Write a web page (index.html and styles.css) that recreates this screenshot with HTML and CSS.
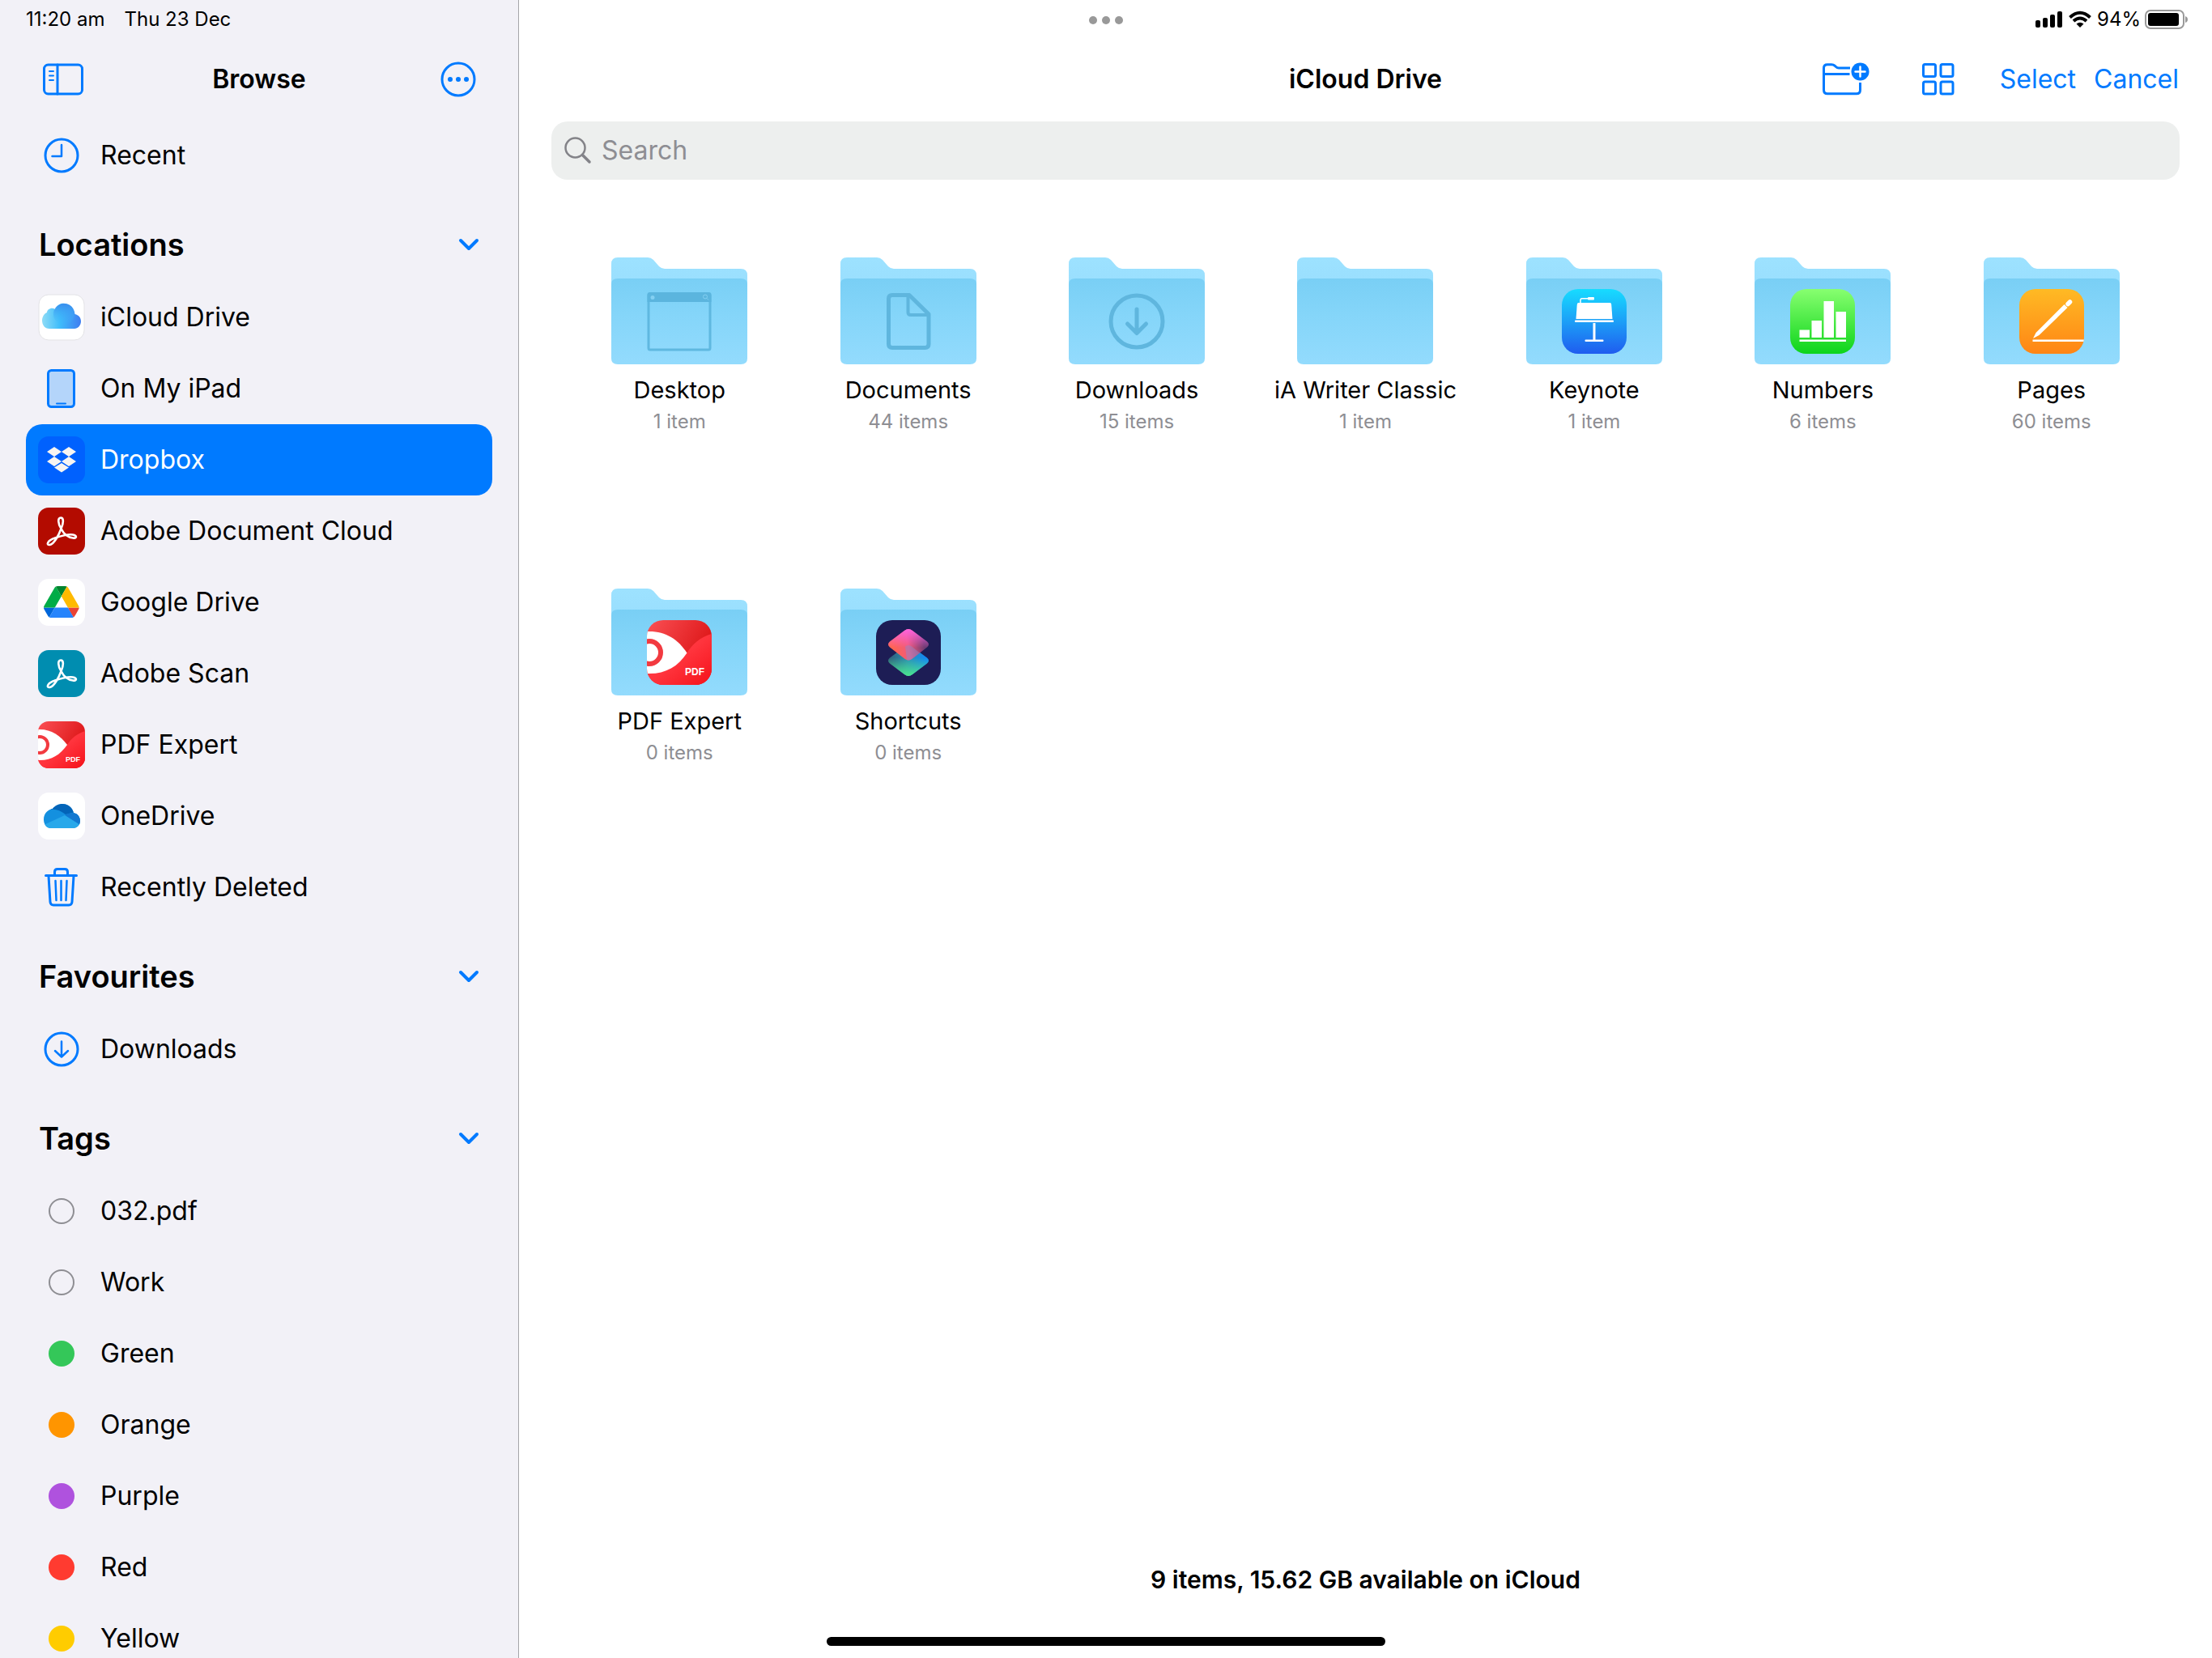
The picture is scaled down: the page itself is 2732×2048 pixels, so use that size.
FILE: index.html
```html
<!DOCTYPE html>
<html lang="en">
<head>
    <meta charset="UTF-8">
    <meta name="viewport" content="width=device-width, initial-scale=1.0">
    <title>iCloud Drive</title>
    <link rel="stylesheet" href="styles.css">
</head>
<body>

    <!-- Shared shapes -->
    <svg class="defs" width="0" height="0" aria-hidden="true">
        <defs>
            <linearGradient id="folderBack" x1="0" y1="0" x2="0" y2="1">
                <stop offset="0" stop-color="#9de2ff"/>
                <stop offset="1" stop-color="#97dcfd"/>
            </linearGradient>
            <linearGradient id="folderFront" x1="0" y1="0" x2="0" y2="1">
                <stop offset="0" stop-color="#79cff5"/>
                <stop offset="0.4" stop-color="#84d5f9"/>
                <stop offset="1" stop-color="#93dbfd"/>
            </linearGradient>
            <linearGradient id="pdfDark" x1="0" y1="0" x2="1" y2="0.6">
                <stop offset="0" stop-color="#fb5055"/>
                <stop offset="1" stop-color="#d90f10"/>
            </linearGradient>
            <linearGradient id="pdfLight" x1="0" y1="0" x2="1" y2="1">
                <stop offset="0" stop-color="#ff4450"/>
                <stop offset="0.5" stop-color="#ff343d"/>
                <stop offset="1" stop-color="#f5121a"/>
            </linearGradient>
            <linearGradient id="keynoteBg" x1="0" y1="0" x2="0" y2="1">
                <stop offset="0" stop-color="#17dcff"/>
                <stop offset="0.5" stop-color="#1c9ff7"/>
                <stop offset="1" stop-color="#1f5cef"/>
            </linearGradient>
            <linearGradient id="numbersBg" x1="0" y1="0" x2="0" y2="1">
                <stop offset="0" stop-color="#88ff70"/>
                <stop offset="1" stop-color="#0dd41b"/>
            </linearGradient>
            <linearGradient id="pagesBg" x1="0" y1="0" x2="0" y2="1">
                <stop offset="0" stop-color="#ffba24"/>
                <stop offset="1" stop-color="#ff8515"/>
            </linearGradient>
            <linearGradient id="pink" x1="0.1" y1="0.6" x2="0.9" y2="0.5">
                <stop offset="0" stop-color="#ff6550"/>
                <stop offset="0.5" stop-color="#ef5a7c"/>
                <stop offset="1" stop-color="#6b3a72"/>
            </linearGradient>
            <linearGradient id="pinkTop" x1="0" y1="0" x2="0" y2="1">
                <stop offset="0" stop-color="#ff63e0"/>
                <stop offset="0.6" stop-color="#ff63e0" stop-opacity="0"/>
            </linearGradient>
            <linearGradient id="blue" x1="0" y1="0.4" x2="1" y2="0.5">
                <stop offset="0" stop-color="#2f5d77"/>
                <stop offset="0.5" stop-color="#2b91b5"/>
                <stop offset="1" stop-color="#0e86ff"/>
            </linearGradient>
            <linearGradient id="greenBottom" x1="0" y1="0" x2="0" y2="1">
                <stop offset="0.4" stop-color="#4be58c" stop-opacity="0"/>
                <stop offset="1" stop-color="#4be58c"/>
            </linearGradient>
            <linearGradient id="cloudBg" x1="0" y1="0" x2="1" y2="0">
                <stop offset="0" stop-color="#8fdcf6"/>
                <stop offset="0.45" stop-color="#3fbdfb"/>
                <stop offset="1" stop-color="#3f7df0"/>
            </linearGradient>
            <linearGradient id="cloudTop" x1="0" y1="0" x2="0" y2="1">
                <stop offset="0" stop-color="#3a8eee"/>
                <stop offset="1" stop-color="#3fbdfb" stop-opacity="0"/>
            </linearGradient>
            <clipPath id="tile58"><rect width="58" height="58" rx="13"/></clipPath>
            <clipPath id="tile80"><rect width="80" height="80" rx="20"/></clipPath>
            <clipPath id="oneCloud"><path d="M16 44 C11 44 7 40 7 33 C7 26 12 21 18 20 C21 16 26 14 30 14 C37 14 42 18 44 25 C49 26 52 30 52 35 C52 40 48 44 43 44 Z"/></clipPath>

            <symbol id="folder" viewBox="0 0 168 132">
                <path fill="url(#folderBack)" d="M0 8 Q0 0 8 0 H45 Q49 0 52 3 L59 11 Q62 14 66 14 H160 Q168 14 168 22 V60 H0 Z"/>
                <path fill="url(#folderFront)" d="M0 33 Q0 26 8 26 H160 Q168 26 168 33 V125 Q168 132 160 132 H8 Q0 132 0 125 Z"/>
            </symbol>
            <symbol id="acrobat" viewBox="0 0 58 58">
                <path fill="none" stroke="#fff" stroke-width="2.6" stroke-linejoin="round" d="M28.5 26 C24.5 20 24 12.5 28 12.5 C32 12.5 31.5 19 28.5 26 C26 33 20 45 14.5 46 C9.5 46.5 11.5 40.5 21 37.5 C30 34.5 37 32.5 43 33.5 C49 34.5 47.5 38.5 43 37.5 C37 37 32 33 28.5 26 Z"/>
            </symbol>
            <symbol id="chevron" viewBox="0 0 28 18">
                <path fill="none" stroke="#007aff" stroke-width="4" stroke-linecap="round" stroke-linejoin="round" d="M4 4 L14 14 L24 4"/>
            </symbol>
        </defs>
    </svg>

    <!-- Sidebar -->
    <aside class="sidebar">
        <div class="status">
            <span>11:20 am</span>
            <span>Thu 23 Dec</span>
        </div>

        <div class="sidebar-head">
            <button class="icon-btn" aria-label="Hide sidebar">
                <svg width="52" height="42" viewBox="0 0 52 42" fill="none" stroke="#007aff" stroke-width="3" stroke-linecap="round">
                    <rect x="2.5" y="3" width="47" height="36" rx="5"/>
                    <path d="M19 3 V39"/>
                    <path stroke-width="2" d="M9 11 H14 M9 16.5 H14 M9 22 H14"/>
                </svg>
            </button>
            <h1>Browse</h1>
            <button class="icon-btn icon-right" aria-label="More">
                <svg width="44" height="44" viewBox="0 0 44 44">
                    <circle cx="22" cy="22" r="20" fill="none" stroke="#007aff" stroke-width="3"/>
                    <g fill="#007aff"><circle cx="12" cy="22" r="3"/><circle cx="22" cy="22" r="3"/><circle cx="32" cy="22" r="3"/></g>
                </svg>
            </button>
        </div>

        <nav>
            <a class="row" href="#">
                <svg class="tile" viewBox="0 0 58 58" fill="none" stroke="#007aff" stroke-width="3" stroke-linecap="round" stroke-linejoin="round">
                    <circle cx="29" cy="29" r="20"/>
                    <path stroke-width="2.5" d="M29 16 V30 H17.5"/>
                </svg>
                Recent
            </a>

            <div class="section">
                <h2>Locations</h2>
                <button class="icon-btn" aria-label="Collapse Locations"><svg width="28" height="18"><use href="#chevron"/></svg></button>
            </div>

            <a class="row" href="#">
                <svg class="tile" viewBox="0 0 58 58">
                    <rect x="1" y="1" width="56" height="56" rx="12" fill="#fff" stroke="#e3e3e6"/>
                    <path fill="url(#cloudBg)" d="M14 43 C8 43 5 38 5 33 C5 28 8 24 11 23 C11 19 17 16 21 19 C25 11 32 11 36 12.5 C42 14 45 20 45.5 25 C50 26 53 29 53 34 C53 39 49 43 45 43 Z"/>
                    <circle cx="32" cy="25" r="13" fill="url(#cloudTop)"/>
                </svg>
                iCloud Drive
            </a>
            <a class="row" href="#">
                <svg class="tile" viewBox="0 0 58 58" stroke="#007aff" stroke-linecap="round">
                    <rect x="12.5" y="6.5" width="32" height="45" rx="4" fill="#b4d5fa" stroke-width="3"/>
                    <path stroke-width="2" d="M23 47.5 H34"/>
                </svg>
                On My iPad
            </a>
            <a class="row selected" href="#" aria-current="page">
                <svg class="tile" viewBox="0 0 58 58">
                    <rect width="58" height="58" rx="13" fill="#0061fe"/>
                    <path fill="#f7f5f2" d="M20 13 L29 19 L20 25 L11 19 Z M38 13 L47 19 L38 25 L29 19 Z M20 25 L29 31 L20 37 L11 31 Z M38 25 L47 31 L38 37 L29 31 Z M29 33 L38 38.5 L29 44.5 L20 38.5 Z"/>
                </svg>
                Dropbox
            </a>
            <a class="row" href="#">
                <svg class="tile" viewBox="0 0 58 58">
                    <rect width="58" height="58" rx="13" fill="#b30b00"/>
                    <use href="#acrobat"/>
                </svg>
                Adobe Document Cloud
            </a>
            <a class="row" href="#">
                <svg class="tile" viewBox="0 0 58 58">
                    <rect width="58" height="58" rx="13" fill="#fff"/>
                    <g transform="translate(7 9) scale(0.5)">
                        <path fill="#0066da" d="m6.6 66.85 3.85 6.65c.8 1.4 1.95 2.5 3.3 3.3l13.75-23.8h-27.5c0 1.55.4 3.1 1.2 4.5z"/>
                        <path fill="#00ac47" d="m43.65 25-13.75-23.8c-1.35.8-2.5 1.9-3.3 3.3l-25.4 44a9.06 9.06 0 0 0-1.2 4.5h27.5z"/>
                        <path fill="#ea4335" d="m73.55 76.8c1.35-.8 2.5-1.9 3.3-3.3l1.6-2.75 7.65-13.25c.8-1.4 1.2-2.95 1.2-4.5h-27.5l5.85 11.5z"/>
                        <path fill="#00832d" d="m43.65 25 13.75-23.8c-1.35-.8-2.9-1.2-4.5-1.2h-18.5c-1.6 0-3.15.45-4.5 1.2z"/>
                        <path fill="#2684fc" d="m59.8 53h-32.3l-13.75 23.8c1.35.8 2.9 1.2 4.5 1.2h50.8c1.6 0 3.15-.45 4.5-1.2z"/>
                        <path fill="#ffba00" d="m73.4 26.5-12.7-22c-.8-1.4-1.95-2.5-3.3-3.3l-13.75 23.8 16.15 28h27.45c0-1.55-.4-3.1-1.2-4.5z"/>
                    </g>
                </svg>
                Google Drive
            </a>
            <a class="row" href="#">
                <svg class="tile" viewBox="0 0 58 58">
                    <rect width="58" height="58" rx="13" fill="#008db0"/>
                    <use href="#acrobat"/>
                </svg>
                Adobe Scan
            </a>
            <a class="row" href="#">
                <svg class="tile" viewBox="0 0 58 58">
                    <g clip-path="url(#tile58)">
                        <rect width="58" height="58" fill="url(#pdfDark)"/>
                        <path fill="url(#pdfLight)" d="M58 12 C47 16 41 21 36 29 L0 44 V58 H58 Z"/>
                        <path fill="#fff" d="M0 10 C15 9 27 17 36 29 C27 42 15 49 0 48 Z"/>
                        <circle cx="2" cy="29" r="10" fill="none" stroke="#f23a40" stroke-width="4"/>
                    </g>
                    <text class="pdf-small" x="34" y="50">PDF</text>
                </svg>
                PDF Expert
            </a>
            <a class="row" href="#">
                <svg class="tile" viewBox="0 0 58 58">
                    <rect width="58" height="58" rx="13" fill="#fff"/>
                    <g clip-path="url(#oneCloud)">
                        <rect width="58" height="58" fill="#1490df"/>
                        <path fill="#0364b8" d="M16 21 C22 20 27 22 34 27 L46 24 L44 10 H16 Z"/>
                        <path fill="#1278d0" d="M33 28 C38 25 42 24 52 27 V40 Z"/>
                        <path fill="#28a8ea" d="M7 40 L33 28 L52 40 V46 H7 Z"/>
                    </g>
                </svg>
                OneDrive
            </a>
            <a class="row" href="#">
                <svg class="tile" viewBox="0 0 58 58" fill="none" stroke="#007aff" stroke-width="3" stroke-linecap="round" stroke-linejoin="round">
                    <path d="M9.5 14.5 H47.5 M13 15 L15 47 Q15.3 51 19 51 H38 Q41.7 51 42 47 L44 15 M20.5 14 V10 Q20.5 6.5 24 6.5 H33 Q36.5 6.5 36.5 10 V14"/>
                    <path stroke-width="2.5" d="M21.5 21 L22.5 45 M28.5 21 V45 M35.5 21 L34.5 45"/>
                </svg>
                Recently Deleted
            </a>

            <div class="section">
                <h2>Favourites</h2>
                <button class="icon-btn" aria-label="Collapse Favourites"><svg width="28" height="18"><use href="#chevron"/></svg></button>
            </div>

            <a class="row" href="#">
                <svg class="tile" viewBox="0 0 58 58" fill="none" stroke="#007aff" stroke-width="3" stroke-linecap="round" stroke-linejoin="round">
                    <circle cx="29" cy="29" r="20"/>
                    <path stroke-width="2.5" d="M29 19.5 V38 M21 31 L29 38.5 L37 31"/>
                </svg>
                Downloads
            </a>

            <div class="section">
                <h2>Tags</h2>
                <button class="icon-btn" aria-label="Collapse Tags"><svg width="28" height="18"><use href="#chevron"/></svg></button>
            </div>

            <a class="row" href="#"><span class="tag tag-none"></span>032.pdf</a>
            <a class="row" href="#"><span class="tag tag-none"></span>Work</a>
            <a class="row" href="#"><span class="tag tag-green"></span>Green</a>
            <a class="row" href="#"><span class="tag tag-orange"></span>Orange</a>
            <a class="row" href="#"><span class="tag tag-purple"></span>Purple</a>
            <a class="row" href="#"><span class="tag tag-red"></span>Red</a>
            <a class="row" href="#"><span class="tag tag-yellow"></span>Yellow</a>
        </nav>
    </aside>

    <!-- Files -->
    <main class="main">
        <div class="status status-right">
            <svg width="34" height="22" viewBox="0 0 34 22">
                <rect x="0" y="12" width="6" height="9" rx="2"/><rect x="9" y="9" width="6" height="12" rx="2"/>
                <rect x="18" y="5" width="6" height="16" rx="2"/><rect x="27" y="1" width="6" height="20" rx="2"/>
            </svg>
            <svg width="28" height="22" viewBox="0 0 28 22" fill="none" stroke="#000" stroke-width="4">
                <path d="M1.5 8.5 Q14 -3 26.5 8.5"/>
                <path d="M6 13 Q14 6 22 13"/>
                <path fill="#000" stroke="none" d="M9.5 16.5 Q14 13 18.5 16.5 L14 21 Z"/>
            </svg>
            <span>94%</span>
            <svg class="battery" width="54" height="24" viewBox="0 0 54 24">
                <rect x="1" y="1" width="47" height="22" rx="6" fill="none" stroke="#999" stroke-width="2"/>
                <rect x="4" y="4" width="38" height="16" rx="3"/>
                <path fill="#999" d="M50 8 Q53 9 53 12 Q53 15 50 16 Z"/>
            </svg>
        </div>

        <header class="toolbar">
            <h1>iCloud Drive</h1>
            <div class="actions">
                <button class="icon-btn" aria-label="New folder">
                    <svg width="58" height="42" viewBox="0 0 58 42" fill="none" stroke="#007aff" stroke-width="3">
                        <path d="M34 7 H20 Q18 7 16.5 5.5 L15.5 4.5 Q13.5 2.8 11 2.8 H6 Q1.5 2.8 1.5 7 V34 Q1.5 38.8 6 38.8 H42 Q46.5 38.8 46.5 34 V25"/>
                        <path d="M1.5 14.5 H33.5"/>
                        <circle cx="46.5" cy="11.5" r="11" fill="#007aff" stroke="none"/>
                        <path stroke="#fff" stroke-width="2.5" stroke-linecap="round" d="M40.5 11.5 H52.5 M46.5 5.5 V17.5"/>
                    </svg>
                </button>
                <button class="icon-btn grid-btn" aria-label="View options">
                    <svg width="40" height="40" viewBox="0 0 40 40" fill="none" stroke="#007aff" stroke-width="3">
                        <rect x="1.5" y="1.5" width="15" height="15" rx="2"/><rect x="23" y="1.5" width="15" height="15" rx="2"/>
                        <rect x="1.5" y="23" width="15" height="15" rx="2"/><rect x="23" y="23" width="15" height="15" rx="2"/>
                    </svg>
                </button>
                <button class="text-btn">Select</button>
                <button class="text-btn">Cancel</button>
            </div>
        </header>

        <label class="search">
            <svg width="34" height="34" viewBox="0 0 34 34" fill="none" stroke="#838388" stroke-linecap="round">
                <circle cx="13.5" cy="13.5" r="12" stroke-width="2.5"/>
                <path stroke-width="3.5" d="M23 23 L31 31"/>
            </svg>
            <input type="search" placeholder="Search" aria-label="Search">
        </label>

        <section class="files">
            <a class="file" href="#">
                <svg class="folder" viewBox="0 0 168 132">
                    <use href="#folder"/>
                    <rect x="46" y="45" width="76" height="69" rx="2" fill="none" stroke="#5fb8e0" stroke-width="3"/>
                    <path fill="#5bb5de" d="M44.5 55 V46 Q44.5 43 47.5 43 H120.5 Q123.5 43 123.5 46 V55 Z"/>
                    <circle cx="51" cy="49.5" r="2.5" fill="#84d0f2"/>
                    <g fill="none" stroke="#84d0f2"><circle cx="116" cy="48.5" r="2.5"/><path d="M118 50.5 L120 52.5"/></g>
                </svg>
                <span class="name">Desktop</span>
                <span class="count">1 item</span>
            </a>
            <a class="file" href="#">
                <svg class="folder" viewBox="0 0 168 132">
                    <use href="#folder"/>
                    <path fill="none" stroke="#5fb6de" stroke-width="5" stroke-linejoin="round" d="M64 46.5 H85 L109 70 V107 Q109 111.5 104.5 111.5 H64 Q59.5 111.5 59.5 107 V51 Q59.5 46.5 64 46.5 Z"/>
                    <path fill="none" stroke="#5fb6de" stroke-width="4" d="M83.5 47 V68 Q83.5 71 87 71 H109"/>
                </svg>
                <span class="name">Documents</span>
                <span class="count">44 items</span>
            </a>
            <a class="file" href="#">
                <svg class="folder" viewBox="0 0 168 132">
                    <use href="#folder"/>
                    <g fill="none" stroke="#5fb6de" stroke-width="5" stroke-linecap="round" stroke-linejoin="round">
                        <circle cx="84" cy="79" r="32"/>
                        <path d="M84 64 V93 M72.5 82 L84 93.5 L95.5 82"/>
                    </g>
                </svg>
                <span class="name">Downloads</span>
                <span class="count">15 items</span>
            </a>
            <a class="file" href="#">
                <svg class="folder" viewBox="0 0 168 132"><use href="#folder"/></svg>
                <span class="name">iA Writer Classic</span>
                <span class="count">1 item</span>
            </a>
            <a class="file" href="#">
                <svg class="folder" viewBox="0 0 168 132">
                    <use href="#folder"/>
                    <g transform="translate(44 39)">
                        <rect width="80" height="80" rx="20" fill="url(#keynoteBg)"/>
                        <path fill="#fff" d="M20.5 17 H59.5 Q61 17 61.2 19 L62.5 37 H17.5 L18.8 19 Q19 17 20.5 17 Z"/>
                        <rect x="16" y="38.5" width="48" height="2.5" rx="1" fill="#fff"/>
                        <rect x="38.5" y="42" width="3" height="22" fill="#fff"/>
                        <rect x="28.5" y="62.5" width="23" height="2.5" rx="1" fill="#fff"/>
                        <path fill="none" stroke="#fff" stroke-width="1.5" d="M23 17 V14 Q23 11.8 25 11.8 H33"/>
                        <rect x="32" y="10" width="8" height="3.5" rx="1" fill="#fff"/>
                    </g>
                </svg>
                <span class="name">Keynote</span>
                <span class="count">1 item</span>
            </a>
            <a class="file" href="#">
                <svg class="folder" viewBox="0 0 168 132">
                    <use href="#folder"/>
                    <g transform="translate(44 39)">
                        <rect width="80" height="80" rx="20" fill="url(#numbersBg)"/>
                        <path fill="#fff" d="M11.5 50.5 H24 V60 H11.5 Z M26.5 39 H39 V60 H26.5 Z M41.5 15 H54 V60 H41.5 Z M56.5 28 H69 V60 H56.5 Z M11.5 62.5 H69 V65 H11.5 Z"/>
                    </g>
                </svg>
                <span class="name">Numbers</span>
                <span class="count">6 items</span>
            </a>
            <a class="file" href="#">
                <svg class="folder" viewBox="0 0 168 132">
                    <use href="#folder"/>
                    <g transform="translate(44 39)">
                        <g clip-path="url(#tile80)">
                            <rect width="80" height="80" fill="url(#pagesBg)"/>
                            <path fill="#fff" d="M16.5 62.5 H80 V65 H16.5 Z M17 61 L20.5 54 L55.5 19 L59.5 23 L24.5 57 Z"/>
                            <path stroke="#fff" stroke-width="5.5" stroke-linecap="round" d="M60 18.5 L62.5 16"/>
                        </g>
                    </g>
                </svg>
                <span class="name">Pages</span>
                <span class="count">60 items</span>
            </a>
            <a class="file" href="#">
                <svg class="folder" viewBox="0 0 168 132">
                    <use href="#folder"/>
                    <g transform="translate(44 39)">
                        <g clip-path="url(#tile80)">
                            <rect width="80" height="80" fill="url(#pdfDark)"/>
                            <path fill="url(#pdfLight)" d="M80 17 C65 21 56 30 49 41 L0 60 V80 H80 Z"/>
                            <path fill="#fff" d="M0 14 C22 13 38 23 49.5 40.5 C38 58 22 67 0 66 Z"/>
                            <circle cx="3" cy="40" r="14" fill="none" stroke="#f23a40" stroke-width="6"/>
                        </g>
                        <text class="pdf-big" x="47" y="68">PDF</text>
                    </g>
                </svg>
                <span class="name">PDF Expert</span>
                <span class="count">0 items</span>
            </a>
            <a class="file" href="#">
                <svg class="folder" viewBox="0 0 168 132">
                    <use href="#folder"/>
                    <g transform="translate(44 39)">
                        <rect width="80" height="80" rx="20" fill="#1d1d55"/>
                        <path fill="url(#blue)" d="M36 32.5 Q40 29.5 44 32.5 L63 46.5 Q67 50 63 53.5 L45 67 Q40 71 35 67 L17 53.5 Q13 50 17 46.5 Z"/>
                        <path fill="url(#greenBottom)" d="M36 32.5 Q40 29.5 44 32.5 L63 46.5 Q67 50 63 53.5 L45 67 Q40 71 35 67 L17 53.5 Q13 50 17 46.5 Z"/>
                        <path fill="url(#pink)" d="M35 13 Q40 9 45 13 L63 26.5 Q67 30 63 33.5 L45 47.5 Q40 51.5 35 47.5 L17 33.5 Q13 30 17 26.5 Z"/>
                        <path fill="url(#pinkTop)" d="M35 13 Q40 9 45 13 L63 26.5 Q67 30 63 33.5 L45 47.5 Q40 51.5 35 47.5 L17 33.5 Q13 30 17 26.5 Z"/>
                        <path fill="#9186c9" opacity="0.5" d="M36 32.5 Q40 29.5 44 32.5 L54 40.5 L45 47.5 Q40 51 38 49 Z"/>
                    </g>
                </svg>
                <span class="name">Shortcuts</span>
                <span class="count">0 items</span>
            </a>
        </section>

        <p class="summary">9 items, 15.62 GB available on iCloud</p>
    </main>

    <!-- Multitasking dots and home bar sit over the page -->
    <div class="dots"><span></span><span></span><span></span></div>
    <div class="home-bar"></div>

</body>
</html>
```

FILE: styles.css
```css
* {
    margin: 0;
    padding: 0;
    box-sizing: border-box;
}

body {
    font-family: Inter, "Liberation Sans", sans-serif;
    font-size: 32px;
    line-height: 40px;
    color: #000;
    background-color: #fff;
    display: flex;
    height: 100vh;
    overflow: hidden;
    position: relative;
}

a {
    color: inherit;
    text-decoration: none;
}

button {
    font: inherit;
    background: none;
    border: none;
    cursor: pointer;
}

svg {
    display: block;
    flex: none;
}

.defs {
    position: absolute;
}

h1 {
    font-size: 32px;
    font-weight: 600;
}

/* Status bar */
.status {
    height: 48px;
    padding: 0 32px;
    display: flex;
    align-items: center;
    gap: 24px;
    font-size: 24px;
}

.status-right {
    justify-content: flex-end;
    padding: 0 29px;
    gap: 7px;
}

.battery {
    margin-left: -2px;
}

/* Sidebar */
.sidebar {
    width: 641px;
    flex: none;
    background-color: #f2f1f7;
    border-right: 1px solid #a5a5a9;
    overflow-y: auto;
    scrollbar-width: none;
}

.sidebar-head {
    height: 100px;
    padding: 0 52px;
    display: grid;
    grid-template-columns: 1fr auto 1fr;
    align-items: center;
}

.icon-btn {
    justify-self: start;
}

.icon-right {
    justify-self: end;
}

.row {
    height: 88px;
    margin: 0 32px;
    padding: 0 15px;
    border-radius: 20px;
    display: flex;
    align-items: center;
    gap: 19px;
}

.row.selected {
    background-color: #007aff;
    color: #fff;
}

.tile {
    width: 58px;
    height: 58px;
}

.section {
    height: 112px;
    padding: 20px 47px 0 48px;
    display: flex;
    align-items: center;
    justify-content: space-between;
}

.section h2 {
    font-size: 38px;
    font-weight: 600;
}

/* Tag dots */
.tag {
    width: 32px;
    height: 32px;
    margin: 0 13px;
    border-radius: 50%;
}

.tag-none {
    border: 2px solid #8e8e93;
}

.tag-green {
    background-color: #34c759;
}

.tag-orange {
    background-color: #ff9500;
}

.tag-purple {
    background-color: #af52de;
}

.tag-red {
    background-color: #ff3b30;
}

.tag-yellow {
    background-color: #ffcc00;
}

/* Main area */
.main {
    flex: 1;
    display: flex;
    flex-direction: column;
}

.toolbar {
    height: 100px;
    padding: 0 41px;
    display: grid;
    grid-template-columns: 1fr auto 1fr;
    align-items: center;
}

.toolbar h1 {
    grid-column: 2;
}

.actions {
    display: flex;
    align-items: center;
    justify-content: flex-end;
    gap: 22px;
}

.grid-btn {
    margin: 0 34px 0 43px;
}

.text-btn {
    color: #007aff;
}

.search {
    height: 72px;
    margin: 2px 40px 0;
    padding: 0 16px;
    border-radius: 20px;
    background-color: #edefee;
    display: flex;
    align-items: center;
    gap: 12px;
}

.search input {
    flex: 1;
    font: inherit;
    background: none;
    border: none;
    outline: none;
}

.search input::placeholder {
    color: #8e8e93;
}

/* Folder grid */
.files {
    flex: 1;
    padding: 96px 57px 0;
    display: grid;
    grid-template-columns: repeat(7, 1fr);
    align-content: start;
    row-gap: 191px;
}

.file {
    display: flex;
    flex-direction: column;
    align-items: center;
    text-align: center;
}

.folder {
    width: 168px;
    height: 132px;
    margin-bottom: 14px;
}

.name {
    font-size: 29px;
    line-height: 36px;
    white-space: nowrap;
}

.count {
    margin-top: 6px;
    font-size: 24px;
    line-height: 30px;
    color: #8e8e93;
}

.pdf-big,
.pdf-small {
    font-family: "Liberation Sans", sans-serif;
    font-weight: bold;
    fill: #fff;
}

.pdf-big {
    font-size: 12px;
}

.pdf-small {
    font-size: 9px;
}

.summary {
    padding-bottom: 77px;
    text-align: center;
    font-size: 30px;
    font-weight: 600;
}

/* System overlays */
.dots {
    position: absolute;
    top: 20px;
    left: 0;
    right: 0;
    display: flex;
    justify-content: center;
    gap: 6px;
}

.dots span {
    width: 10px;
    height: 10px;
    border-radius: 50%;
    background-color: #999;
}

.home-bar {
    position: absolute;
    bottom: 15px;
    left: 50%;
    width: 690px;
    height: 11px;
    margin-left: -345px;
    border-radius: 6px;
    background-color: #000;
}
```
